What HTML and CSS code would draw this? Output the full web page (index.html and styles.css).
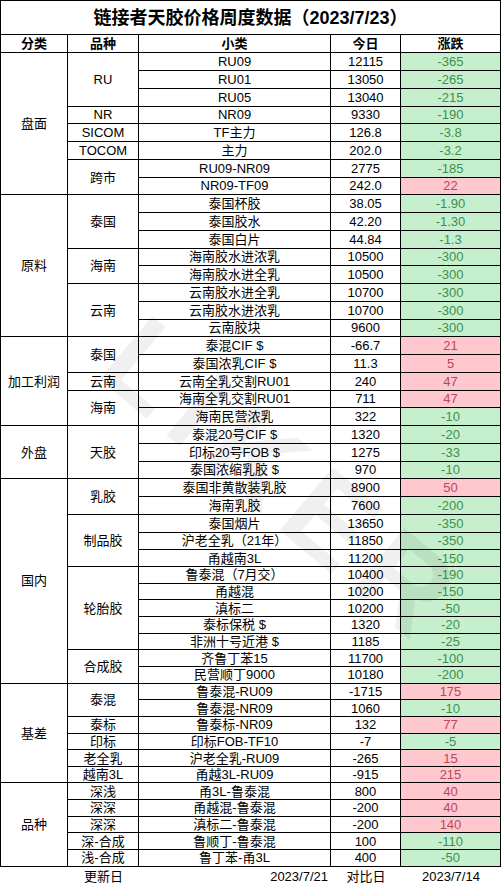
FILE: index.html
```html
<!DOCTYPE html>
<html lang="zh-CN">
<head>
<meta charset="utf-8">
<title>链接者天胶价格周度数据</title>
<link rel="stylesheet" href="styles.css">
</head>
<body>
<div class="sheet">
  <div class="grid">
    <div class="c title">链接者天胶价格周度数据（2023/7/23）</div>
    <div class="c hd">分类</div><div class="c hd">品种</div><div class="c hd">小类</div><div class="c hd">今日</div><div class="c hd">涨跌</div>

    <div class="c s8">盘面</div>
    <div class="c s3">RU</div><div class="c">RU09</div><div class="c">12115</div><div class="c g">-365</div>
    <div class="c">RU01</div><div class="c">13050</div><div class="c g">-265</div>
    <div class="c">RU05</div><div class="c">13040</div><div class="c g">-215</div>
    <div class="c">NR</div><div class="c">NR09</div><div class="c">9330</div><div class="c g">-190</div>
    <div class="c">SICOM</div><div class="c">TF主力</div><div class="c">126.8</div><div class="c g">-3.8</div>
    <div class="c">TOCOM</div><div class="c">主力</div><div class="c">202.0</div><div class="c g">-3.2</div>
    <div class="c s2">跨市</div><div class="c">RU09-NR09</div><div class="c">2775</div><div class="c g">-185</div>
    <div class="c">NR09-TF09</div><div class="c">242.0</div><div class="c r">22</div>

    <div class="c s8">原料</div>
    <div class="c s3">泰国</div><div class="c">泰国杯胶</div><div class="c">38.05</div><div class="c g">-1.90</div>
    <div class="c">泰国胶水</div><div class="c">42.20</div><div class="c g">-1.30</div>
    <div class="c">泰国白片</div><div class="c">44.84</div><div class="c g">-1.3</div>
    <div class="c s2">海南</div><div class="c">海南胶水进浓乳</div><div class="c">10500</div><div class="c g">-300</div>
    <div class="c">海南胶水进全乳</div><div class="c">10500</div><div class="c g">-300</div>
    <div class="c s3">云南</div><div class="c">云南胶水进全乳</div><div class="c">10700</div><div class="c g">-300</div>
    <div class="c">云南胶水进浓乳</div><div class="c">10700</div><div class="c g">-300</div>
    <div class="c">云南胶块</div><div class="c">9600</div><div class="c g">-300</div>

    <div class="c s5">加工利润</div>
    <div class="c s2">泰国</div><div class="c">泰混CIF $</div><div class="c">-66.7</div><div class="c r">21</div>
    <div class="c">泰国浓乳CIF $</div><div class="c">11.3</div><div class="c r">5</div>
    <div class="c">云南</div><div class="c">云南全乳交割RU01</div><div class="c">240</div><div class="c r">47</div>
    <div class="c s2">海南</div><div class="c">海南全乳交割RU01</div><div class="c">711</div><div class="c r">47</div>
    <div class="c">海南民营浓乳</div><div class="c">322</div><div class="c g">-10</div>

    <div class="c s3">外盘</div>
    <div class="c s3">天胶</div><div class="c">泰混20号CIF $</div><div class="c">1320</div><div class="c g">-20</div>
    <div class="c">印标20号FOB $</div><div class="c">1275</div><div class="c g">-33</div>
    <div class="c">泰国浓缩乳胶 $</div><div class="c">970</div><div class="c g">-10</div>

    <div class="c s12">国内</div>
    <div class="c s2">乳胶</div><div class="c">泰国非黄散装乳胶</div><div class="c">8900</div><div class="c r">50</div>
    <div class="c">海南乳胶</div><div class="c">7600</div><div class="c g">-200</div>
    <div class="c s3">制品胶</div><div class="c">泰国烟片</div><div class="c">13650</div><div class="c g">-350</div>
    <div class="c">沪老全乳（21年）</div><div class="c">11850</div><div class="c g">-350</div>
    <div class="c">甬越南3L</div><div class="c">11200</div><div class="c g">-150</div>
    <div class="c s5">轮胎胶</div><div class="c">鲁泰混（7月交）</div><div class="c">10400</div><div class="c g">-190</div>
    <div class="c">甬越混</div><div class="c">10200</div><div class="c g">-150</div>
    <div class="c">滇标二</div><div class="c">10200</div><div class="c g">-50</div>
    <div class="c">泰标保税 $</div><div class="c">1320</div><div class="c g">-20</div>
    <div class="c">非洲十号近港 $</div><div class="c">1185</div><div class="c g">-25</div>
    <div class="c s2">合成胶</div><div class="c">齐鲁丁苯15</div><div class="c">11700</div><div class="c g">-100</div>
    <div class="c">民营顺丁9000</div><div class="c">10180</div><div class="c g">-200</div>

    <div class="c s6">基差</div>
    <div class="c s2">泰混</div><div class="c">鲁泰混-RU09</div><div class="c">-1715</div><div class="c r">175</div>
    <div class="c">鲁泰混-NR09</div><div class="c">1060</div><div class="c g">-10</div>
    <div class="c">泰标</div><div class="c">鲁泰标-NR09</div><div class="c">132</div><div class="c r">77</div>
    <div class="c">印标</div><div class="c">印标FOB-TF10</div><div class="c">-7</div><div class="c g">-5</div>
    <div class="c">老全乳</div><div class="c">沪老全乳-RU09</div><div class="c">-265</div><div class="c r">15</div>
    <div class="c">越南3L</div><div class="c">甬越3L-RU09</div><div class="c">-915</div><div class="c r">215</div>

    <div class="c s5">品种</div>
    <div class="c">深浅</div><div class="c">甬3L-鲁泰混</div><div class="c">800</div><div class="c r">40</div>
    <div class="c">深深</div><div class="c">甬越混-鲁泰混</div><div class="c">-200</div><div class="c r">40</div>
    <div class="c">深深</div><div class="c">滇标二-鲁泰混</div><div class="c">-200</div><div class="c r">140</div>
    <div class="c">深-合成</div><div class="c">鲁顺丁-鲁泰混</div><div class="c">100</div><div class="c g">-110</div>
    <div class="c">浅-合成</div><div class="c">鲁丁苯-甬3L</div><div class="c">400</div><div class="c g">-50</div>
  </div>
  <div class="foot">
    <div class="f"></div>
    <div class="f">更新日</div>
    <div class="f right">2023/7/21</div>
    <div class="f">对比日</div>
    <div class="f">2023/7/14</div>
  </div>
  <div class="watermark">LIKER</div>
</div>
</body>
</html>
```
FILE: styles.css
```css
html, body {
  margin: 0;
  padding: 0;
  background: #fff;
}
body {
  width: 503px;
  height: 886px;
  overflow: hidden;
  font-family: "Liberation Sans", "Noto Sans CJK SC", sans-serif;
  font-size: 13px;
  color: #000;
}
.sheet {
  position: relative;
  width: 503px;
}
.grid {
  display: grid;
  width: 501px;
  box-sizing: border-box;
  grid-template-columns: 67px 71px 192px 70px 100px;
  grid-template-rows: 34px 18.3px repeat(28, 17.76px) repeat(19, 16.66px);
  border-left: 1px solid #000;
  border-top: 1px solid #000;
}
.c {
  box-sizing: border-box;
  border-right: 1px solid #000;
  border-bottom: 1px solid #000;
  display: flex;
  align-items: center;
  justify-content: center;
  white-space: nowrap;
  line-height: 1;
  overflow: hidden;
}
.title {
  grid-column: 1 / -1;
  font-size: 18px;
  font-weight: bold;
  padding-top: 1px;
}
.hd {
  font-weight: bold;
}
.s2 { grid-row: span 2; }
.s3 { grid-row: span 3; }
.s5 { grid-row: span 5; }
.s6 { grid-row: span 6; }
.s8 { grid-row: span 8; }
.s12 { grid-row: span 12; }
.g {
  background: #c6efce;
  color: #3f8f4c;
}
.r {
  background: #ffc7ce;
  color: #b8495c;
}
.foot {
  display: grid;
  grid-template-columns: 67px 71px 192px 70px 100px;
  margin-left: 1px;
  height: 19px;
}
.f {
  display: flex;
  align-items: center;
  justify-content: center;
  line-height: 1;
  white-space: nowrap;
}
.f.right {
  justify-content: flex-end;
  padding-right: 3px;
}
.watermark {
  position: absolute;
  left: 65px;
  top: 420px;
  width: 440px;
  text-align: center;
  font-family: "Liberation Sans", sans-serif;
  font-weight: bold;
  font-size: 120px;
  letter-spacing: 14px;
  line-height: 1;
  color: rgba(0, 0, 0, 0.06);
  transform: rotate(40deg);
  pointer-events: none;
}
```
